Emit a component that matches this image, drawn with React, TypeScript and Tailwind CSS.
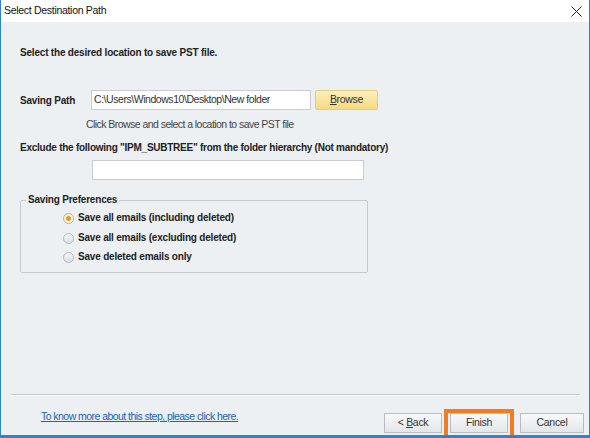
import React from "react";

const tahoma = { fontFamily: '"Liberation Sans", Arial, sans-serif' };

function Radio({ checked, label, className }: { checked?: boolean; label: string; className?: string }) {
  return (
    <label className={`flex items-center gap-[4px] pl-[42px] ${className ?? ""}`}>
      <span
        className={`flex h-[11px] w-[11px] items-center justify-center rounded-full border ${
          checked ? "border-[#b9b3a0] bg-[#f7f3e6]" : "border-[#b4b8bd] bg-gradient-to-b from-[#f4f5f6] to-[#dcdfe2]"
        }`}
      >
        {checked && <span className="h-[5px] w-[5px] rounded-full bg-[#e69a24]" />}
      </span>
      <span className="text-[10px] font-bold leading-[14px] tracking-[-0.2px] text-[#222]">{label}</span>
    </label>
  );
}

export default function App() {
  return (
    <div
      className="flex h-[438px] w-[590px] flex-col border-x border-b-[3px] border-[#2a84cf] bg-[#edf0f3]"
      style={tahoma}
    >
      {/* title bar */}
      <div className="flex h-[22px] items-center justify-between bg-white pl-[3px] pr-[7px]">
        <span className="text-[10.5px] tracking-[-0.3px] text-[#111]">Select Destination Path</span>
        <svg width="11" height="11" viewBox="0 0 11 11" aria-hidden="true">
          <path d="M0.5 0.5l10 10M10.5 0.5l-10 10" stroke="#222" strokeWidth="1" />
        </svg>
      </div>

      <div className="flex flex-1 flex-col pl-[19px]">
        <p className="mt-[24px] text-[10px] font-bold leading-[14px] tracking-[-0.2px] text-[#222]">
          Select the desired location to save PST file.
        </p>

        <div className="mt-[30px] flex items-center">
          <span className="w-[71px] text-[10px] font-bold tracking-[-0.2px] text-[#222]">Saving Path</span>
          <div className="flex h-[20px] w-[220px] items-center border border-[#c9cdd2] bg-white px-[2px] text-[10.5px] tracking-[-0.45px] text-[#333]">
            C:\Users\Windows10\Desktop\New folder
          </div>
          <button className="ml-[4px] h-[20px] w-[63px] rounded-[2px] border border-[#e6cd7c] bg-gradient-to-b from-[#fcefbf] to-[#f6da7c] text-[10.5px] tracking-[-0.3px] text-[#333]">
            <span className="underline">B</span>rowse
          </button>
        </div>

        <p className="ml-[66px] mt-[7px] text-[10.5px] leading-[14px] tracking-[-0.55px] text-[#444]">
          Click Browse and select a location to save PST file
        </p>

        <p className="mt-[10px] text-[10px] font-bold leading-[14px] tracking-[-0.25px] text-[#222]">
          Exclude the following "IPM_SUBTREE" from the folder hierarchy (Not mandatory)
        </p>

        <div className="ml-[72px] mt-[5px] h-[20px] w-[272px] border border-[#c9cdd2] bg-white" />

        <fieldset className="mt-[13px] h-[80px] w-[348px] rounded-[2px] border border-[#c6cacf]">
          <legend className="ml-[5px] px-[2px] text-[10px] font-bold leading-[14px] tracking-[-0.2px] text-[#222]">
            Saving Preferences
          </legend>
          <Radio checked label="Save all emails (including deleted)" className="mt-[4px]" />
          <Radio label="Save all emails (excluding deleted)" className="mt-[6px]" />
          <Radio label="Save deleted emails only" className="mt-[5px]" />
        </fieldset>

        <div className="flex-1" />

        <div className="mr-[9px] -ml-[9px] h-[2px] border-t border-b border-t-[#c5c9ce] border-b-white" />

        {/* footer */}
        <div className="flex h-[39px] shrink-0 items-end justify-between pr-[5px]">
          <a href="#" className="mb-[12px] ml-[21px] text-[10.5px] leading-[14px] tracking-[-0.55px] text-[#1565b8] underline">
            To know more about this step, please click here.
          </a>
          <div className="flex items-end">
            <button className="mb-[2px] h-[20px] w-[58px] border border-[#b9bdc2] bg-gradient-to-b from-[#f8f9fa] to-[#e3e6e9] text-[10.5px] tracking-[-0.3px] text-[#333]">
              &lt; <span className="underline">B</span>ack
            </button>
            <div className="ml-[2px] flex h-[26px] items-start border-x-[4px] border-t-[4px] border-[#f07d22] px-[2px]">
              <button className="h-[20px] w-[58px] border border-[#b9bdc2] bg-gradient-to-b from-[#f8f9fa] to-[#e3e6e9] text-[10.5px] tracking-[-0.3px] text-[#333]">
                Finish
              </button>
            </div>
            <button className="mb-[2px] ml-[6px] h-[20px] w-[64px] border border-[#b9bdc2] bg-gradient-to-b from-[#f8f9fa] to-[#e3e6e9] text-[10.5px] tracking-[-0.3px] text-[#333]">
              Cancel
            </button>
          </div>
        </div>
      </div>
    </div>
  );
}
